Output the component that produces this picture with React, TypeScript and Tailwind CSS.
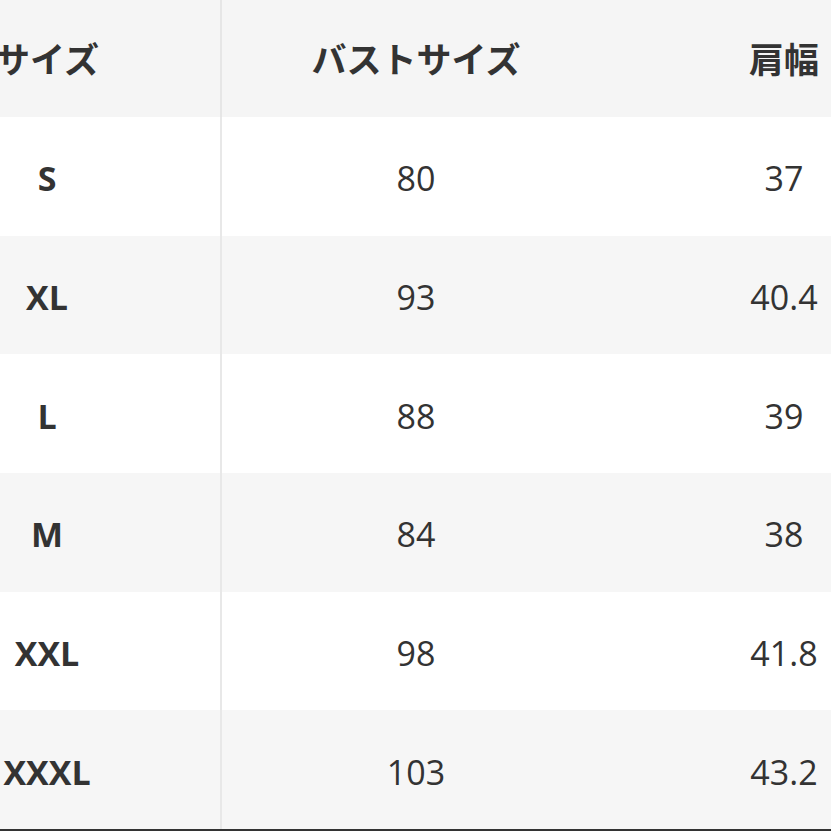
import React from "react";

const rows = [
  { size: "S", bust: "80", shoulder: "37" },
  { size: "XL", bust: "93", shoulder: "40.4" },
  { size: "L", bust: "88", shoulder: "39" },
  { size: "M", bust: "84", shoulder: "38" },
  { size: "XXL", bust: "98", shoulder: "41.8" },
  { size: "XXXL", bust: "103", shoulder: "43.2" },
];

export default function App() {
  return (
    <div
      className="w-[831px] h-[831px] overflow-hidden bg-white text-[#333333]"
      style={{ fontFamily: '"Open Sans", "Noto Sans", "Noto Sans CJK JP", sans-serif' }}
    >
      <div className="flex flex-col w-[958px]">
        <div className="flex h-[117px] bg-[#f5f5f5] font-bold text-[35px] [font-family:'Noto_Sans_CJK_JP',sans-serif]">
          <div className="w-[220px] flex items-center">
            <div className="w-[94px] flex justify-center whitespace-nowrap">サイズ</div>
          </div>
          <div className="w-[2px] bg-[#e6e6e6]" />
          <div className="w-[388px] flex items-center justify-center whitespace-nowrap">バストサイズ</div>
          <div className="w-[348px] flex items-center justify-center whitespace-nowrap">肩幅</div>
        </div>
        {rows.map((r, i) => (
          <div
            key={r.size}
            className={`flex h-[118.7px] text-[34px] pt-[5px] ${i % 2 === 1 ? "bg-[#f6f6f6]" : "bg-white"}`}
          >
            <div className="w-[220px] flex items-center">
              <div className="w-[94px] flex justify-center font-bold whitespace-nowrap">{r.size}</div>
            </div>
            <div className="w-[2px] -mt-[5px] bg-[#e8e8e8]" />
            <div className="w-[388px] flex items-center justify-center">{r.bust}</div>
            <div className="w-[348px] flex items-center justify-center">{r.shoulder}</div>
          </div>
        ))}
        <div className="h-[3px] bg-[#333333]" />
      </div>
    </div>
  );
}
